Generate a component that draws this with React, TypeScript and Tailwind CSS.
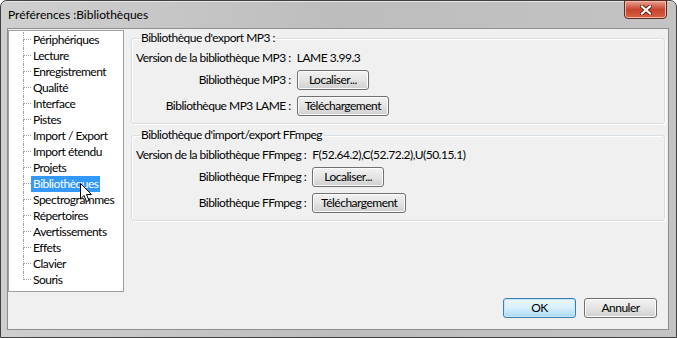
import React from "react";

const treeItems = [
  "Périphériques",
  "Lecture",
  "Enregistrement",
  "Qualité",
  "Interface",
  "Pistes",
  "Import / Export",
  "Import étendu",
  "Projets",
  "Bibliothèques",
  "Spectrogrammes",
  "Répertoires",
  "Avertissements",
  "Effets",
  "Clavier",
  "Souris",
];

function Btn({ children, w, def }: { children: React.ReactNode; w: string; def?: boolean }) {
  return (
    <div
      className={
        "h-[20px] rounded-[3px] border flex items-center justify-center leading-none " +
        w +
        (def
          ? " border-[#3c7fb1] bg-gradient-to-b from-[#eaf6fd] via-[#d9f0fc] to-[#a7d9f5] shadow-[inset_0_0_0_1px_#c5e6f8]"
          : " border-[#707070] bg-gradient-to-b from-[#f2f2f2] via-[#e4e4e4] to-[#cfcfcf] shadow-[inset_0_0_0_1px_#fcfcfc]")
      }
    >
      {children}
    </div>
  );
}

function Group({
  title,
  version,
  label,
  rows,
}: {
  title: string;
  version: [string, string];
  label: [string, string];
  rows: [string, string, string, string];
}) {
  return (
    <fieldset className="border border-[#d5dfe5] rounded-[3px] shadow-[inset_1px_1px_0_#fff,1px_1px_0_#fff] px-[4px] pb-[7px]">
      <legend className="ml-[4px] px-[1px] h-[16px] leading-[16px]">{title}</legend>
      <div className="grid grid-cols-[auto_auto] justify-start gap-x-[6px] items-center mt-[4px]">
        <div className="text-right h-[16px] leading-[16px]">{version[0]}</div>
        <div className="h-[16px] leading-[16px]">{version[1]}</div>
        <div className="text-right mt-[4px]">{rows[0]}</div>
        <div className="mt-[4px]">
          <Btn w={label[0]}>{rows[1]}</Btn>
        </div>
        <div className="text-right mt-[6px]">{rows[2]}</div>
        <div className="mt-[6px]">
          <Btn w={label[1]}>{rows[3]}</Btn>
        </div>
      </div>
    </fieldset>
  );
}

export default function App() {
  return (
    <div className="w-[677px] h-[338px] bg-white text-[12px] text-black font-['Lato','Liberation_Sans',sans-serif]">
      <div className="w-full h-full rounded-t-[7px] border border-[#404040] bg-gradient-to-r from-[#cfcfcf] via-[#bdbdbd] to-[#c3c3c3] flex flex-col shadow-[inset_0_1px_0_#e6e6e6]">
        {/* title bar */}
        <div className="h-[27px] flex items-start justify-between pl-[7px] pr-[9px]">
          <div className="mt-[6px] text-[12px] leading-[16px]">Préférences :Bibliothèques</div>
          <div className="w-[43px] h-[19px] -mt-px rounded-b-[4px] border border-[#5a2a20] bg-gradient-to-b from-[#e8a090] via-[#c8432d] to-[#d8603f] shadow-[inset_0_0_0_1px_#f0b8a8] flex items-center justify-center">
            <svg width="12" height="10" viewBox="0 0 12 10">
              <path d="M1.5 1 L10.5 9 M10.5 1 L1.5 9" stroke="#5a2418" strokeWidth="4" strokeLinecap="square" />
              <path d="M2 1.5 L10 8.5 M10 1.5 L2 8.5" stroke="#ffffff" strokeWidth="2.2" strokeLinecap="square" />
            </svg>
          </div>
        </div>
        {/* client area */}
        <div className="flex-1 ml-[6px] mr-[7px] mb-[7px] border border-[#8e8e8e] bg-[#f0f0f0] flex flex-col tracking-[-0.5px]">
          <div className="flex pt-[1px]">
            {/* tree */}
            <div className="relative w-[116px] h-[262px] border border-[#a0a0a0] bg-white pt-[1px]">
              {treeItems.map((t, i) => {
                const last = i === treeItems.length - 1;
                const sel = t === "Bibliothèques";
                return (
                  <div key={t} className="flex h-[16px]">
                    <div className="w-[14px]" />
                    <div className="w-[8px] flex flex-col">
                      <div className="h-[8px] border-l border-b border-dotted border-[#a0a0a0]" />
                      <div className={"flex-1 " + (last ? "" : "border-l border-dotted border-[#a0a0a0]")} />
                    </div>
                    <div
                      className={
                        "h-[16px] leading-[16px] px-[2px] " + (sel ? "bg-[#3399ff] text-white" : "")
                      }
                    >
                      {t}
                    </div>
                  </div>
                );
              })}
              {/* mouse cursor */}
              <svg className="absolute left-[71px] top-[152px]" width="13" height="20" viewBox="0 0 13 20">
                <path
                  d="M0.5 0.5 L0.5 16 L4 12.5 L6.5 18.5 L9 17.5 L6.5 11.5 L11.5 11.5 Z"
                  fill="#ffffff"
                  stroke="#000000"
                  strokeWidth="1"
                  strokeLinejoin="miter"
                />
              </svg>
            </div>
            {/* right panel */}
            <div className="flex-1 pl-[7px] pr-[3px] flex flex-col gap-[3px]">
              <Group
                title="Bibliothèque d'export MP3 :"
                version={["Version de la bibliothèque MP3 :", "LAME 3.99.3"]}
                label={["w-[72px]", "w-[92px]"]}
                rows={["Bibliothèque MP3 :", "Localiser...", "Bibliothèque MP3 LAME :", "Téléchargement"]}
              />
              <Group
                title="Bibliothèque d'import/export FFmpeg"
                version={["Version de la bibliothèque FFmpeg :", "F(52.64.2),C(52.72.2),U(50.15.1)"]}
                label={["w-[72px]", "w-[94px]"]}
                rows={["Bibliothèque FFmpeg :", "Localiser...", "Bibliothèque FFmpeg :", "Téléchargement"]}
              />
            </div>
          </div>
          <div className="flex justify-end gap-[8px] mt-[6px] pr-[11px]">
            <Btn w="w-[73px]" def>
              OK
            </Btn>
            <Btn w="w-[73px]">Annuler</Btn>
          </div>
        </div>
      </div>
    </div>
  );
}
